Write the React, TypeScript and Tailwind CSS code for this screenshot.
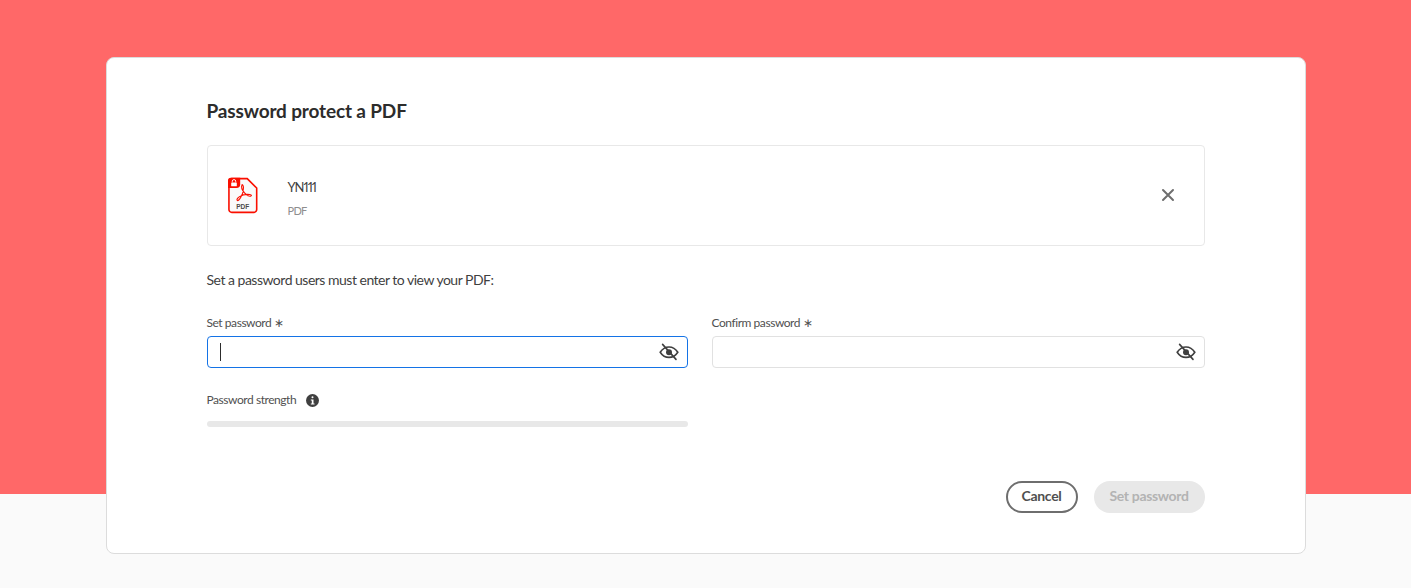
const font = "[font-family:Lato,'Noto_Sans',sans-serif]"

function EyeOff() {
  return (
    <svg width="20" height="18" viewBox="0 0 20 18" fill="none" stroke="#3f3f3f" strokeWidth="1.6">
      <path d="M1.2 9.2C3.4 5.8 6.4 4 10 4s6.6 1.8 8.8 5.2C16.6 12.6 13.6 14.4 10 14.4S3.4 12.6 1.2 9.2z" />
      <circle cx="10" cy="9.2" r="3" fill="#3f3f3f" stroke="none" />
      <path d="M3.6 1.4l13.4 15" stroke="#3f3f3f" strokeWidth="1.6" strokeLinecap="round" />
    </svg>
  )
}

function PdfIcon() {
  return (
    <svg width="30" height="37" viewBox="0 0 32 38" fill="none">
      <path d="M4 1h16.500L30.600 11v23a3 3 0 01-3 3H4a3 3 0 01-3-3V4a3 3 0 013-3z" fill="#fafafa" stroke="#fa0f00" strokeWidth="1.700" />
      <path d="M3 0h10v7a4 4 0 01-4 4H0V3a3 3 0 013-3z" fill="#fa0f00" />
      <rect x="3.400" y="5" width="6" height="4.200" rx="0.600" fill="#fff" />
      <path d="M4.600 5V3.800a1.800 1.800 0 013.600 0V5" stroke="#fff" strokeWidth="1" />
      <path d="M15 7.500c-1.300 2.500.3 6 2.600 8.800 1.800 2.200 4.600 3.800 6.600 3.400 1.300-.3.900-1.600-.9-1.800-3.800-.4-8 .3-11 2.300-2 1.300-3.300 3.200-2.500 4 .8.800 2.500-.9 3.700-3 1.600-2.700 3-6.500 3-10.500 0-1.700-.9-3.600-1.500-3.200z" stroke="#fa0f00" strokeWidth="1.200" />
      <text x="15.800" y="33" textAnchor="middle" fontSize="7" fontWeight="700" fill="#4b4b4b" fontFamily="Liberation Sans, sans-serif">PDF</text>
    </svg>
  )
}

function Field({ label, focused, width }: { label: string; focused?: boolean; width: string }) {
  return (
    <div className={`flex flex-col ${width}`}>
      <div className="text-[12px] leading-[16px] tracking-[-0.45px] text-[#505050] mb-[5px]">
        {label} <span className="text-[#505050] tracking-normal">∗</span>
      </div>
      <div
        className={`h-[32px] rounded-[4px] border flex items-center bg-white pr-[8px] ${
          focused ? "border-[#1473e6]" : "border-[#e1e1e1]"
        }`}
      >
        {focused && <div className="ml-[12px] w-px h-[18px] bg-[#2c2c2c]" />}
        <div className="ml-auto flex">
          <EyeOff />
        </div>
      </div>
    </div>
  )
}

export default function App() {
  return (
    <div className={`h-[588px] overflow-hidden pt-[57px] bg-[linear-gradient(#ff6868_494px,#fafafa_494px)] ${font}`}>
      <div className="mx-auto w-[1200px] h-[497px] bg-white border border-[#dcdcdc] rounded-[8px] pl-[100px] pr-[100px] pt-[40px]">
        <h1 className="text-[19px] leading-[26px] tracking-[-0.15px] font-bold text-[#2c2c2c]">Password protect a PDF</h1>

        <div className="mt-[21px] h-[101px] border border-[#e8e8e8] rounded-[4px] flex items-center pl-[20px] pr-[29px]">
          <PdfIcon />
          <div className="ml-[30px] pt-[6px] flex flex-col">
            <span className="text-[13px] leading-[16px] tracking-[-1px] [font-variant-numeric:proportional-nums] text-[#3f3f3f]">YN111</span>
            <span className="mt-[8px] text-[11px] leading-[16px] tracking-[-0.7px] text-[#8e8e8e]">PDF</span>
          </div>
          <svg className="ml-auto mb-[2px]" width="14" height="14" viewBox="0 0 14 14" stroke="#6e6e6e" strokeWidth="2" strokeLinecap="round">
            <path d="M2 2l10 10M12 2L2 12" />
          </svg>
        </div>

        <p className="mt-[24px] text-[14px] leading-[20px] tracking-[-0.5px] text-[#3f3f3f]">Set a password users must enter to view your PDF:</p>

        <div className="mt-[25px] flex gap-[24px]">
          <Field label="Set password" focused width="w-[481px]" />
          <Field label="Confirm password" width="w-[493px]" />
        </div>

        <div className="mt-[24px] flex items-center">
          <span className="text-[12px] leading-[16px] tracking-[-0.45px] text-[#505050]">Password strength</span>
          <svg className="ml-[10px]" width="13" height="13" viewBox="0 0 13 13">
            <circle cx="6.500" cy="6.500" r="6.500" fill="#3f3f3f" />
            <rect x="5.500" y="2.200" width="2" height="2" rx="1" fill="#fff" />
            <path d="M4.800 5.400h2.700v4h1v1.200H4.800V9.400h1V6.600h-1z" fill="#fff" />
          </svg>
        </div>
        <div className="mt-[13px] w-[481px] h-[6px] rounded-full bg-[#e8e8e8]" />

        <div className="mt-[54px] flex justify-end gap-[16px]">
          <button className="h-[32px] w-[72px] rounded-full border-2 border-[#6e6e6e] pb-[3px] text-[14px] tracking-[-0.3px] font-bold text-[#505050]">Cancel</button>
          <button className="h-[32px] w-[111px] rounded-full bg-[#e8e8e8] pb-[3px] text-[14px] tracking-[-0.35px] font-bold text-[#b3b3b3]">Set password</button>
        </div>
      </div>
    </div>
  )
}
